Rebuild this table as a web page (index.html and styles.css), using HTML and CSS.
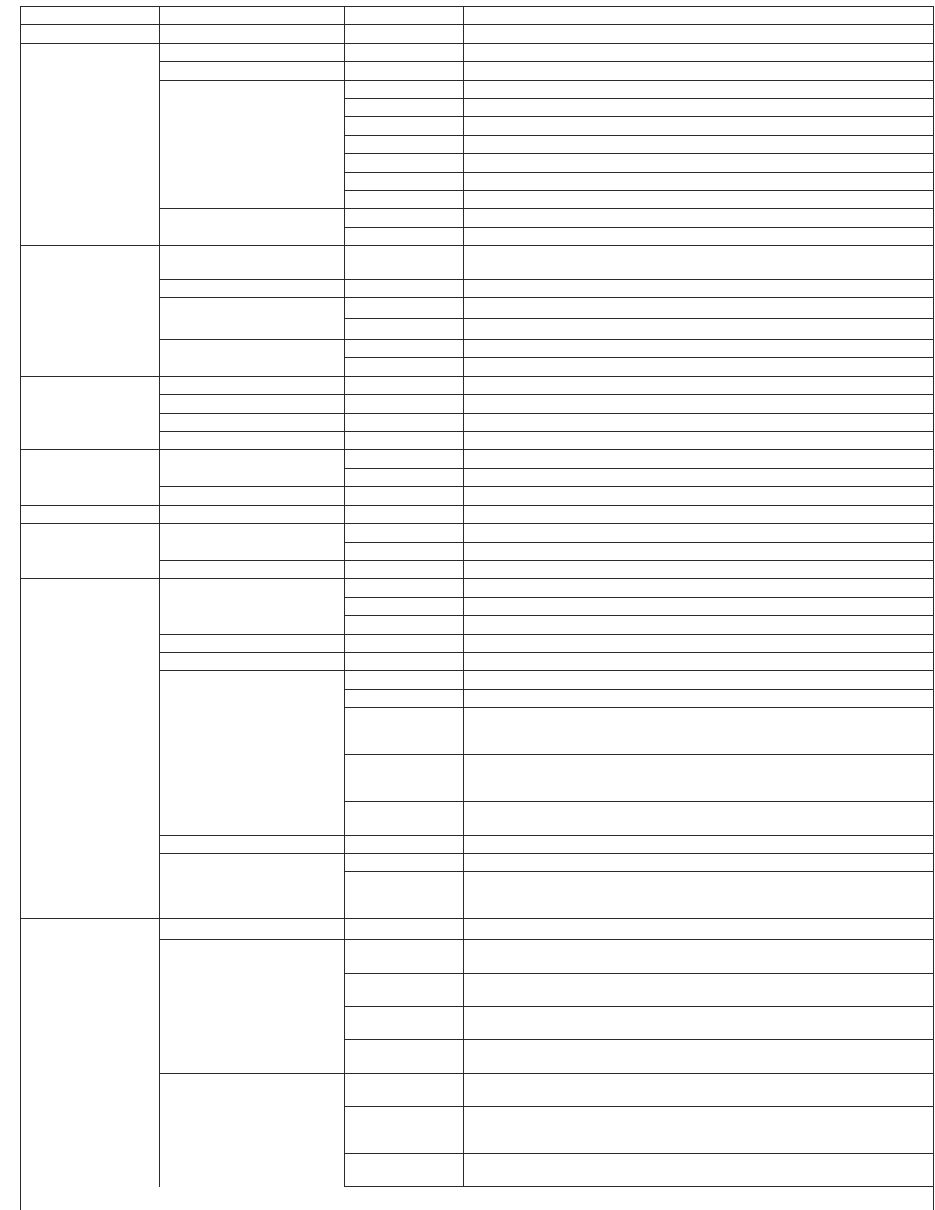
FILE: index.html
```html
<!DOCTYPE html>
<html lang="en">
<head>
<meta charset="utf-8">
<title>Table</title>
<link rel="stylesheet" href="styles.css">
</head>
<body>
<table class="grid">
  <colgroup>
    <col class="c1">
    <col class="c2">
    <col class="c3">
    <col class="c4">
  </colgroup>
  <tbody>
    <tr class="s"><td></td><td></td><td></td><td class="last"></td></tr>
    <tr class="s"><td></td><td></td><td></td><td class="last"></td></tr>
    <tr class="s"><td rowspan="11"></td><td></td><td></td><td class="last"></td></tr>
    <tr class="s"><td></td><td></td><td class="last"></td></tr>
    <tr class="s"><td rowspan="7"></td><td></td><td class="last"></td></tr>
    <tr class="s"><td></td><td class="last"></td></tr>
    <tr class="s"><td></td><td class="last"></td></tr>
    <tr class="s"><td></td><td class="last"></td></tr>
    <tr class="s"><td></td><td class="last"></td></tr>
    <tr class="s"><td></td><td class="last"></td></tr>
    <tr class="s"><td></td><td class="last"></td></tr>
    <tr class="s"><td rowspan="2"></td><td></td><td class="last"></td></tr>
    <tr class="s"><td></td><td class="last"></td></tr>

    <tr class="d"><td rowspan="6"></td><td></td><td></td><td class="last"></td></tr>
    <tr class="s"><td></td><td></td><td class="last"></td></tr>
    <tr class="m"><td rowspan="2"></td><td></td><td class="last"></td></tr>
    <tr class="m"><td></td><td class="last"></td></tr>
    <tr class="s"><td rowspan="2"></td><td></td><td class="last"></td></tr>
    <tr class="s"><td></td><td class="last"></td></tr>

    <tr class="s"><td rowspan="4"></td><td></td><td></td><td class="last"></td></tr>
    <tr class="s"><td></td><td></td><td class="last"></td></tr>
    <tr class="s"><td></td><td></td><td class="last"></td></tr>
    <tr class="s"><td></td><td></td><td class="last"></td></tr>

    <tr class="s"><td rowspan="3"></td><td rowspan="2"></td><td></td><td class="last"></td></tr>
    <tr class="s"><td></td><td class="last"></td></tr>
    <tr class="s"><td></td><td></td><td class="last"></td></tr>

    <tr class="s"><td></td><td></td><td></td><td class="last"></td></tr>

    <tr class="s"><td rowspan="3"></td><td rowspan="2"></td><td></td><td class="last"></td></tr>
    <tr class="s"><td></td><td class="last"></td></tr>
    <tr class="s"><td></td><td></td><td class="last"></td></tr>

    <tr class="s"><td rowspan="13"></td><td rowspan="3"></td><td></td><td class="last"></td></tr>
    <tr class="s"><td></td><td class="last"></td></tr>
    <tr class="s"><td></td><td class="last"></td></tr>
    <tr class="s"><td></td><td></td><td class="last"></td></tr>
    <tr class="s"><td></td><td></td><td class="last"></td></tr>
    <tr class="s"><td rowspan="5"></td><td></td><td class="last"></td></tr>
    <tr class="s"><td></td><td class="last"></td></tr>
    <tr class="t"><td></td><td class="last"></td></tr>
    <tr class="t"><td></td><td class="last"></td></tr>
    <tr class="d"><td></td><td class="last"></td></tr>
    <tr class="s"><td></td><td></td><td class="last"></td></tr>
    <tr class="s"><td rowspan="2"></td><td></td><td class="last"></td></tr>
    <tr class="t"><td></td><td class="last"></td></tr>

    <tr class="m"><td rowspan="9"></td><td></td><td></td><td class="last"></td></tr>
    <tr class="d"><td rowspan="4"></td><td></td><td class="last"></td></tr>
    <tr class="d"><td></td><td class="last"></td></tr>
    <tr class="d"><td></td><td class="last"></td></tr>
    <tr class="d"><td></td><td class="last"></td></tr>
    <tr class="d"><td rowspan="3"></td><td></td><td class="last"></td></tr>
    <tr class="t"><td></td><td class="last"></td></tr>
    <tr class="d end"><td class="close"></td><td class="last close"></td></tr>
    <tr class="tail"><td colspan="3" class="open"></td></tr>
  </tbody>
</table>
</body>
</html>
```

FILE: styles.css
```css
html, body {
  margin: 0;
  padding: 0;
  background: #ffffff;
  font-family: "Liberation Serif", "Times New Roman", serif;
  font-size: 12px;
}

.grid {
  margin: 6px 0 0 20px;
  border-collapse: separate;
  border-spacing: 0;
  table-layout: fixed;
  width: 914px;
}

.grid col.c1 { width: 139px; }
.grid col.c2 { width: 185px; }
.grid col.c3 { width: 119px; }
.grid col.c4 { width: 471px; }

.grid td {
  padding: 0;
  border-top: 1px solid #2a2a2a;
  border-left: 1px solid #2a2a2a;
  box-sizing: border-box;
}

.grid td.last {
  border-right: 1px solid #2a2a2a;
}

.grid td.close {
  border-bottom: 1px solid #2a2a2a;
}

.grid td.open {
  border-top: none;
  border-left: none;
  border-right: 1px solid #2a2a2a;
}

.grid tr.s { height: 18.42px; }
.grid tr.m { height: 21px; }
.grid tr.d { height: 33.35px; }
.grid tr.t { height: 47px; }
.grid tr.d.end { height: 34.35px; }
.grid tr.tail { height: 60px; }
```
